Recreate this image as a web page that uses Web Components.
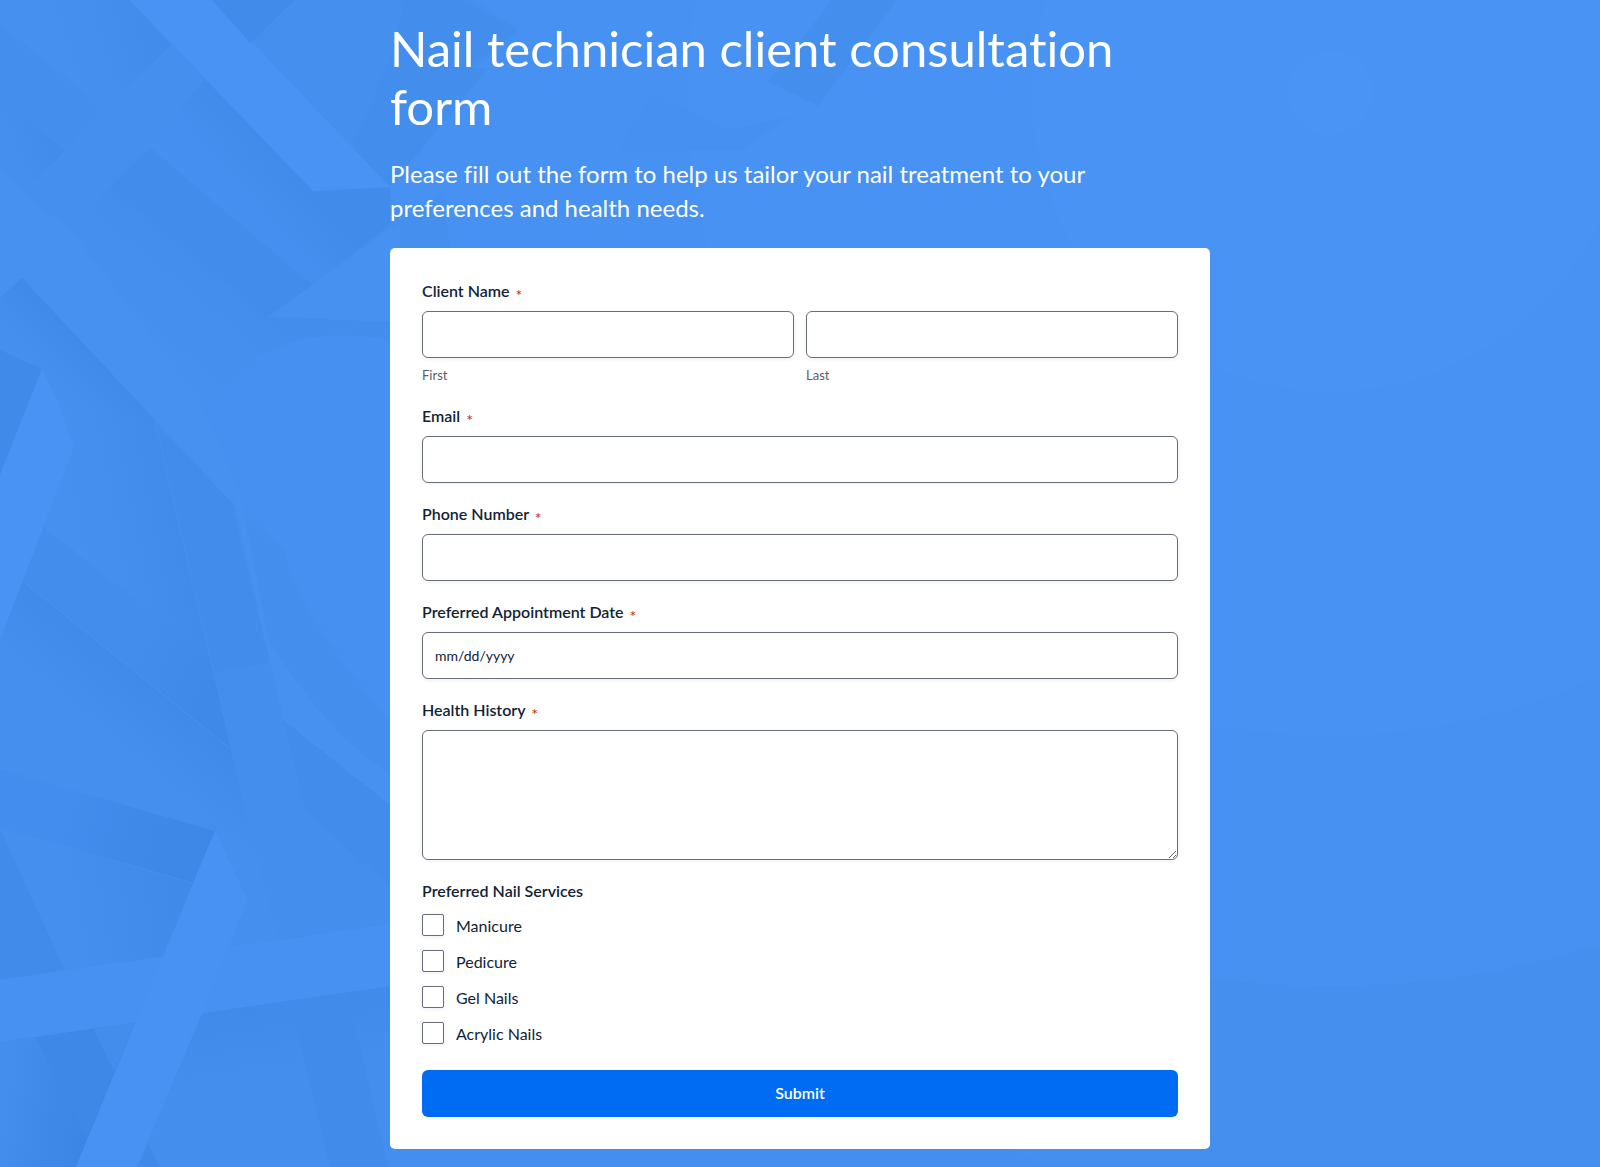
<!DOCTYPE html>
<html lang="en">
<head>
<meta charset="utf-8">
<meta name="viewport" content="width=device-width, initial-scale=1">
<title>Nail technician client consultation form</title>
<style>
  body { margin: 0; background: #4691f1; font-family: Lato, "Noto Sans", sans-serif; font-variant-ligatures: none; color: #112337; }
</style>
</head>
<body>
<consultation-page>
  <page-intro slot="intro">
    <span slot="title">Nail technician client consultation form</span>
    <span slot="description">Please fill out the form to help us tailor your nail treatment to your preferences and health needs.</span>
  </page-intro>
  <form-card>
    <name-field label="Client Name"></name-field>
    <text-field label="Email" type="email" required></text-field>
    <text-field label="Phone Number" type="tel" required></text-field>
    <text-field label="Preferred Appointment Date" type="text" placeholder="mm/dd/yyyy" required></text-field>
    <text-field label="Health History" type="multiline" required></text-field>
    <choice-group label="Preferred Nail Services" options="Manicure|Pedicure|Gel Nails|Acrylic Nails"></choice-group>
    <submit-button>Submit</submit-button>
  </form-card>
</consultation-page>

<script>
const FIELD_CSS = `
  * { box-sizing: border-box; }
  :host { display: block; }
  fieldset { border: 0; margin: 0; padding: 0; min-width: 0; }
  .label { display: block; padding: 0; margin: 0 0 11px; font-size: 16px; line-height: 19px; font-weight: 600; color: #112337; }
  .star { margin-left: 2px; font-size: 16px; font-weight: 400; line-height: 0; vertical-align: -4px; color: #c02b0a; }
  .control {
    display: block; width: 100%; height: 47px; margin: 0; padding: 0 12px;
    border: 1px solid #686e77; border-radius: 6px; background: #fff;
    font-family: inherit; font-size: 14px; color: #112337;
    box-shadow: 0 1px 4px rgba(18, 25, 97, 0.08); outline-offset: 2px;
  }
  .control::placeholder { color: #112337; opacity: 1; }
  textarea.control { height: 130px; padding: 12px; resize: vertical; }
`;
const define = (name, build) => customElements.define(name, class extends HTMLElement {
  connectedCallback() {
    if (!this.shadowRoot) this.attachShadow({ mode: 'open' }).innerHTML = build(this);
  }
});
const star = '<span class="star">*</span>';

define('paper-backdrop', () => `
<style>
  :host { display: block; }
  svg { display: block; width: 100%; height: 100%; }
</style>
<svg viewBox="0 0 1600 1167" preserveAspectRatio="xMidYMid slice" aria-hidden="true">
  <defs>
    <radialGradient id="sky" gradientUnits="userSpaceOnUse" cx="1330" cy="93" r="1000">
      <stop offset=".041" stop-color="#4994f5"/><stop offset=".042" stop-color="#4893f4"/>
      <stop offset=".297" stop-color="#4893f4"/><stop offset=".299" stop-color="#4792f3"/>
      <stop offset=".641" stop-color="#4792f2"/><stop offset=".643" stop-color="#4691f1"/>
      <stop offset=".892" stop-color="#4691f1"/><stop offset=".894" stop-color="#4590ef"/>
    </radialGradient>
    <linearGradient id="a" gradientUnits="userSpaceOnUse" x1="70" y1="60" x2="165" y2="30"><stop stop-color="#4690f0"/><stop offset="1" stop-color="#418beb"/></linearGradient>
    <linearGradient id="c" gradientUnits="userSpaceOnUse" x1="0" y1="170" x2="62" y2="145"><stop stop-color="#4690f0"/><stop offset="1" stop-color="#418ceb"/></linearGradient>
    <linearGradient id="g" gradientUnits="userSpaceOnUse" x1="270" y1="147" x2="205" y2="205"><stop stop-color="#418ceb"/><stop offset="1" stop-color="#4690f1"/></linearGradient>
    <linearGradient id="j" gradientUnits="userSpaceOnUse" x1="195" y1="255" x2="120" y2="345"><stop stop-color="#438eed"/><stop offset="1" stop-color="#4791f1"/></linearGradient>
    <linearGradient id="k" gradientUnits="userSpaceOnUse" x1="100" y1="360" x2="60" y2="400"><stop stop-color="#408bea"/><stop offset="1" stop-color="#4690f0"/></linearGradient>
    <linearGradient id="n" gradientUnits="userSpaceOnUse" x1="190" y1="570" x2="90" y2="590"><stop stop-color="#418ceb"/><stop offset="1" stop-color="#4690f0"/></linearGradient>
    <linearGradient id="q" gradientUnits="userSpaceOnUse" x1="140" y1="630" x2="225" y2="680"><stop stop-color="#438eed"/><stop offset="1" stop-color="#3f89e8"/></linearGradient>
    <linearGradient id="r" gradientUnits="userSpaceOnUse" x1="155" y1="685" x2="105" y2="745"><stop stop-color="#408bea"/><stop offset="1" stop-color="#458fef"/></linearGradient>
    <linearGradient id="s" gradientUnits="userSpaceOnUse" x1="60" y1="810" x2="205" y2="855"><stop stop-color="#428ded"/><stop offset="1" stop-color="#3d87e6"/></linearGradient>
    <linearGradient id="t" gradientUnits="userSpaceOnUse" x1="55" y1="900" x2="180" y2="880"><stop stop-color="#4590ef"/><stop offset="1" stop-color="#408bea"/></linearGradient>
    <linearGradient id="x" gradientUnits="userSpaceOnUse" x1="0" y1="1110" x2="90" y2="1125"><stop stop-color="#448eed"/><stop offset="1" stop-color="#3b85e4"/></linearGradient>
    <linearGradient id="y" gradientUnits="userSpaceOnUse" x1="260" y1="1000" x2="272" y2="1080"><stop stop-color="#408bea"/><stop offset="1" stop-color="#448fee"/></linearGradient>
  </defs>
  <rect width="1600" height="1167" fill="url(#sky)"/>
  <path fill="#4590ef" d="M295 0H475L518 30 390 145 352 145 250 43Z"/>
  <path fill="#438eed" d="M405 0H462L518 30 390 130V60Z"/>
  <path fill="#438eed" d="M390 61 352 146 390 187 500 70Z"/>
  <path fill="#4691f1" d="M518 32 610 70 400 222 390 187Z"/>
  <path fill="#448fee" d="M832 0H897L818 106 768 82Z"/>
  <path fill="#4590f0" d="M650 95 730 130 790 117 740 150 620 150Z"/>
  <path fill="#4590f0" d="M0 170 110 188 268 317 390 322V780L283 720 232 503 22 278 0 298Z"/>
  <path fill="#4791f1" d="M0 170 110 188 200 400 240 490 232 503 22 278 0 298Z"/>
  <path fill="url(#j)" d="M110 188 268 317 390 322V340C340 330 260 330 215 400H200L70 230Z"/>
  <path fill="url(#a)" d="M0 0H130L171 45 105 108 0 25Z"/>
  <path fill="#448fee" d="M0 25 105 108 65 151 0 98Z"/>
  <path fill="url(#c)" d="M0 98 65 151 23 192 0 170Z"/>
  <path fill="#458fef" d="M171 45 212 85 110 188 70 230 23 192Z"/>
  <path fill="url(#g)" d="M205 79 313 191 390 187V225L312 285 150 147Z"/>
  <path fill="#428dec" d="M150 147 312 285 268 317 110 188Z"/>
  <path fill="#4791f1" d="M312 285 400 222V322L268 317Z"/>
  <path fill="#4893f4" d="M130 0H212L390 187 313 191Z"/>
  <path fill="#418ceb" d="M212 0H295L250 43Z"/>
  <path fill="url(#k)" d="M0 298 22 278 155 420 160 560H0Z"/>
  <path fill="url(#n)" d="M74 400 155 422 213 670 43 526Z"/>
  <path fill="#408bea" d="M0 350 42 369 0 475Z"/>
  <path fill="url(#r)" d="M21 580 232 750 276 940 215 831 0 769V630Z"/>
  <path fill="url(#q)" d="M43 526 210 658 232 750 21 580Z"/>
  <path fill="none" stroke="#4792f2" d="M21 580 232 750"/>
  <path fill="#4893f4" d="M42 369 57 400 74 447 0 640V475Z"/>
  <path fill="#448fee" d="M232 503 283 720 390 805V720C320 640 290 580 285 550Z"/>
  <path fill="#4791f1" d="M232 493 283 720 390 805V775C310 720 280 650 268 640L240 490Z"/>
  <path fill="#428dec" d="M283 720 390 805V888L305 810Z"/>
  <path fill="#448fee" d="M305 810 390 888V930H333Z"/>
  <path fill="#428dec" d="M155 422 232 503 283 720 333 932 276 940 211 661Z"/>
  <path fill="#448eed" d="M214 673 270 663 333 932 276 940Z"/>
  <path fill="none" stroke="#4690f0" d="M155 422 211 661 276 940"/>
  <path fill="#418ceb" d="M0 828 65 970 0 980Z"/>
  <path fill="url(#t)" d="M0 828 193 883 163 957 65 970Z"/>
  <path fill="url(#s)" d="M0 769 215 831 193 883 0 828Z"/>
  <path fill="none" stroke="#4590ef" d="M0 828 193 883"/>
  <path fill="url(#x)" d="M0 1042 135 1022 76 1167H0Z"/>
  <path fill="#3e88e7" d="M36 1037 93 1029 114 1072 86 1140Z"/>
  <path fill="#438dec" d="M93 1029 135 1022 114 1072Z"/>
  <path fill="url(#y)" d="M202 1013 390 986V1167H137Z"/>
  <path fill="#418ceb" d="M290 1001 347 992 388 1167H330Z"/>
  <path fill="#4791f2" d="M0 980 390 924V986L0 1042Z"/>
  <path fill="#4892f3" d="M215 831 248 900 202 1013 137 1167H76Z"/>
  <path fill="#3f8ae9" d="M148 1143 160 1167H138Z"/>
  <path fill="#438eee" d="M390 1149H1014L1050 1167H390Z"/>
</svg>`);

define('page-intro', () => `
<style>
  :host { display: block; color: #fff; }
  h1 { margin: 0 0 22px; font-size: 49px; line-height: 58px; font-weight: 400; }
  p { margin: 0; font-size: 24px; line-height: 34px; }
</style>
<h1><slot name="title"></slot></h1>
<p><slot name="description"></slot></p>`);

define('form-card', () => `
<style>
  :host { display: block; }
  form { display: flex; flex-direction: column; gap: 21px; padding: 33px 32px 32px; background: #fff; border-radius: 5px; }
</style>
<form novalidate><slot></slot></form>`);

define('name-field', el => `
<style>${FIELD_CSS}
  .row { display: flex; gap: 12px; }
  .part { flex: 1; display: flex; flex-direction: column; gap: 8px; min-width: 0; }
  .part label { font-size: 13px; line-height: 19px; color: #585e6a; }
</style>
<fieldset>
  <legend class="label">${el.getAttribute('label')} ${star}</legend>
  <div class="row">
    <div class="part"><input class="control" id="first" type="text" required><label for="first">First</label></div>
    <div class="part"><input class="control" id="last" type="text" required><label for="last">Last</label></div>
  </div>
</fieldset>`);

define('text-field', el => {
  const type = el.getAttribute('type');
  const hint = el.getAttribute('placeholder') || '';
  return `
<style>${FIELD_CSS}</style>
<label class="label" for="control">${el.getAttribute('label')} ${el.hasAttribute('required') ? star : ''}</label>
${type === 'multiline'
    ? '<textarea class="control" id="control" required></textarea>'
    : `<input class="control" id="control" type="${type}" placeholder="${hint}" required>`}`;
});

define('choice-group', el => `
<style>${FIELD_CSS}
  .label { margin-bottom: 14px; }
  .choices { display: flex; flex-direction: column; gap: 12px; }
  .choice { display: flex; align-items: flex-start; gap: 12px; }
  .choice label { font-size: 16px; line-height: 24px; }
  input {
    appearance: none; width: 22px; height: 22px; margin: 0; background: #fff;
    border: 1px solid #686e77; border-radius: 2px; box-shadow: 0 1px 4px rgba(18, 25, 97, 0.08);
  }
  input:checked { background: #006cf4; box-shadow: inset 0 0 0 4px #fff; }
</style>
<fieldset>
  <legend class="label">${el.getAttribute('label')}</legend>
  <div class="choices">${el.getAttribute('options').split('|').map((name, i) => `
    <div class="choice"><input type="checkbox" id="c${i}"><label for="c${i}">${name}</label></div>`).join('')}
  </div>
</fieldset>`);

define('submit-button', () => `
<style>
  :host { display: block; margin-top: 3px; }
  button {
    display: block; width: 100%; height: 47px; padding: 0 16px 2px; border: 0; border-radius: 6px; cursor: pointer;
    background: #006cf4; color: #fff; font-family: inherit; font-size: 16px; font-weight: 600;
  }
</style>
<button type="submit"><slot></slot></button>`);

define('consultation-page', () => `
<style>
  :host { display: block; position: relative; min-height: 100vh; overflow: hidden; }
  paper-backdrop { position: absolute; inset: 0; }
  main { position: relative; box-sizing: border-box; display: flex; flex-direction: column; gap: 23px; max-width: 820px; margin: 0 auto; padding: 19px 0 18px; }
</style>
<paper-backdrop></paper-backdrop>
<main><slot name="intro"></slot><slot></slot></main>`);
</script>
</body>
</html>
